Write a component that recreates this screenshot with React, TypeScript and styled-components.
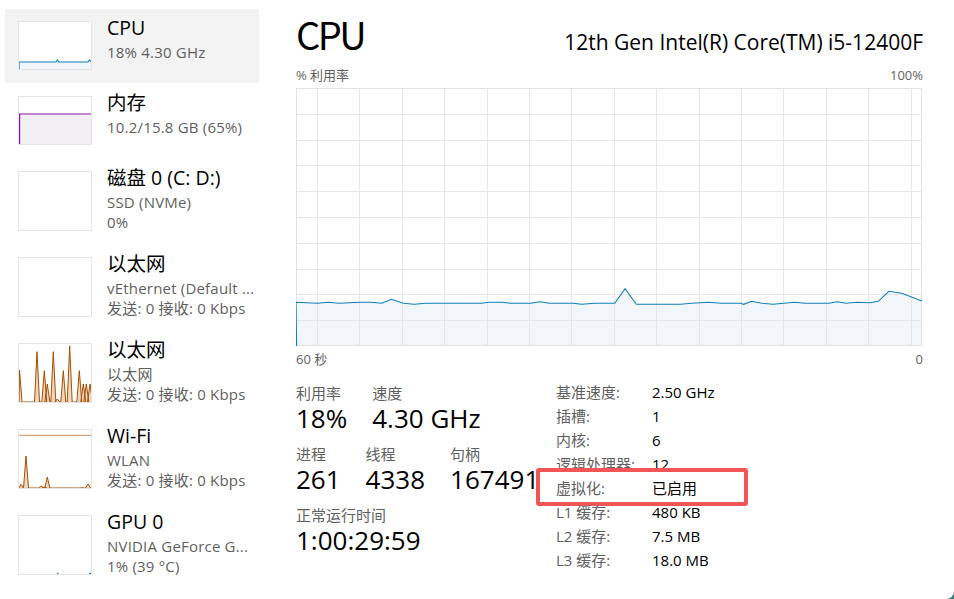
import React from 'react';
import styled, { createGlobalStyle } from 'styled-components';

const GlobalStyle = createGlobalStyle`
  html, body {
    margin: 0;
    padding: 0;
    background: #3f7f83;
  }
  body {
    font-family: "Open Sans", "Noto Sans CJK SC", sans-serif;
    color: #000;
  }
  * { box-sizing: border-box; }
`;

type GraphKind = 'cpu' | 'mem' | 'empty' | 'eth' | 'wifi' | 'gpu';

interface Device {
  title: string;
  lines: string[];
  graph: GraphKind;
  selected?: boolean;
}

const devices: Device[] = [
  { title: 'CPU', lines: ['18% 4.30 GHz'], graph: 'cpu', selected: true },
  { title: '内存', lines: ['10.2/15.8 GB (65%)'], graph: 'mem' },
  { title: '磁盘 0 (C: D:)', lines: ['SSD (NVMe)', '0%'], graph: 'empty' },
  { title: '以太网', lines: ['vEthernet (Default ...', '发送: 0 接收: 0 Kbps'], graph: 'empty' },
  { title: '以太网', lines: ['以太网', '发送: 0 接收: 0 Kbps'], graph: 'eth' },
  { title: 'Wi-Fi', lines: ['WLAN', '发送: 0 接收: 0 Kbps'], graph: 'wifi' },
  { title: 'GPU 0', lines: ['NVIDIA GeForce G...', '1% (39 °C)'], graph: 'gpu' },
];

// main chart points, local to the 626x258 plot
const cpuPoints: [number, number][] = [
  [0, 214.3], [21.5, 215.3], [32.2, 214.3], [42.9, 215.3], [64.5, 214.3], [75.2, 214.3],
  [85.9, 215.3], [95.4, 211.3], [107.4, 215.3], [118.2, 216.3], [128.9, 215.3], [184.7, 215.3],
  [193.4, 214.3], [206.2, 214.3], [214.8, 215.3], [234.2, 215.3], [244.1, 213.7], [253.5, 215.3],
  [277.1, 215.3], [285.7, 216.3], [298.6, 215.3], [318.8, 215.3], [329.1, 200.7], [340.3, 216.3],
  [360.9, 216.3], [384.5, 216.3], [395.3, 215.3], [412.5, 214.3], [425.4, 215.3], [444.7, 215.3],
  [447.7, 216.3], [455.5, 213.3], [466.2, 215.3], [477, 216.3], [487.7, 215.3], [498.5, 214.3],
  [509.2, 215.3], [532.8, 215.3], [541.4, 213.7], [550, 215.3], [560.7, 214.3], [573.6, 214.7],
  [582.2, 213.3], [592.9, 203.3], [605.8, 205.3], [626, 213],
];

const spikes = (peaks: [number, number][], base: number, half = 2.5) => {
  let d = `M0 ${base}`;
  peaks.forEach(([x, y]) => {
    d += ` L${Math.max(0, x - half)} ${base} L${x} ${y} L${x + half} ${base}`;
  });
  return d + ` L72 ${base}`;
};

const ThumbGraph = ({ kind }: { kind: GraphKind }) => {
  if (kind === 'cpu') {
    const line = 'M0 47 L0 40 L37 40 L38.5 38 L40 40 L69 40 L70.5 38 L72 39.5';
    return (
      <svg width="72" height="47" viewBox="0 0 72 47">
        <path d={line + ' L72 47 Z'} fill="#f1f6fa" />
        <path d={line} fill="none" stroke="#117dbb" strokeWidth="1.2" />
      </svg>
    );
  }
  if (kind === 'mem') {
    const line = 'M0.6 47 L0.6 17 L72 17';
    return (
      <svg width="72" height="47" viewBox="0 0 72 47">
        <path d="M0 17 L72 17 L72 47 L0 47 Z" fill="#f2f0f3" />
        <path d={line} fill="none" stroke="#8b12ae" strokeWidth="1.2" />
      </svg>
    );
  }
  if (kind === 'eth') {
    const d = spikes(
      [[0.5, 26], [18, 7.7], [25.3, 26.7], [28.3, 40], [34.3, 7.7], [38.3, 55], [44.3, 26.7],
        [50.7, 2], [60.3, 26.7], [64.3, 40], [67.3, 40], [71, 40]],
      58,
    );
    return (
      <svg width="72" height="58" viewBox="0 0 72 58">
        <path d={d} fill="#efd6bf" stroke="#a74f01" strokeWidth="1" strokeLinejoin="round" />
      </svg>
    );
  }
  if (kind === 'wifi') {
    const d = spikes([[2, 54.3], [7, 26], [22, 56], [25.3, 57], [28.3, 47], [63.3, 57.7], [69, 54]], 58);
    return (
      <svg width="72" height="58" viewBox="0 0 72 58">
        <line x1="0" y1="5.3" x2="72" y2="5.3" stroke="#d4a276" strokeWidth="1.3" />
        <path d={d} fill="#efd6bf" stroke="#a74f01" strokeWidth="1" strokeLinejoin="round" />
      </svg>
    );
  }
  if (kind === 'gpu') {
    return (
      <svg width="72" height="58" viewBox="0 0 72 58">
        <line x1="38" y1="57.4" x2="39.5" y2="57.4" stroke="#117dbb" strokeWidth="1.2" />
        <line x1="70" y1="57.4" x2="72" y2="57.4" stroke="#117dbb" strokeWidth="1.2" />
      </svg>
    );
  }
  return null;
};

const CpuChart = () => {
  const w = 626;
  const h = 258;
  const pts = cpuPoints.map(([x, y]) => `${x} ${y}`).join(' L');
  const hLines = Array.from({ length: 9 }, (_, i) => (i + 1) * (h / 10));
  const vLines = Array.from({ length: 15 }, (_, i) => 21 + i * 42.4);
  return (
    <svg width={w} height={h} viewBox={`0 0 ${w} ${h}`} style={{ display: 'block' }}>
      <path d={`M0 ${h} L${pts} L${w} ${h} Z`} fill="#f1f6fa" />
      {hLines.map((y) => (
        <line key={'h' + y} x1="0" x2={w} y1={Math.round(y) + 0.5} y2={Math.round(y) + 0.5} stroke="#e6e6e6" strokeWidth="1" />
      ))}
      {vLines.map((x) => (
        <line key={'v' + x} x1={Math.round(x) + 0.5} x2={Math.round(x) + 0.5} y1="0" y2={h} stroke="#e6e6e6" strokeWidth="1" />
      ))}
      <rect x="0.5" y="0.5" width={w - 1} height={h - 1} fill="none" stroke="#e3e3e3" strokeWidth="1" />
      <path d={`M0.6 ${h} L${pts}`} fill="none" stroke="#117dbb" strokeWidth="1.1" />
    </svg>
  );
};

export default function App() {
  return (
    <>
      <GlobalStyle />
      <Window>
        <Sidebar>
          {devices.map((d, i) => (
            <DeviceItem key={i} $selected={!!d.selected}>
              <Thumb $tall={d.lines.length > 1}>
                <ThumbGraph kind={d.graph} />
              </Thumb>
              <DeviceText>
                <DeviceTitle>{d.title}</DeviceTitle>
                {d.lines.map((l, j) => (
                  <DeviceLine key={j}>{l}</DeviceLine>
                ))}
              </DeviceText>
            </DeviceItem>
          ))}
        </Sidebar>

        <Main>
          <Header>
            <BigTitle>CPU</BigTitle>
            <CpuName>12th Gen Intel(R) Core(TM) i5-12400F</CpuName>
          </Header>
          <AxisRow $top={9}>
            <span>% 利用率</span>
            <span>100%</span>
          </AxisRow>
          <ChartBox>
            <CpuChart />
          </ChartBox>
          <AxisRow $top={4}>
            <span>60 秒</span>
            <span>0</span>
          </AxisRow>

          <Stats>
            <StatsLeft>
              <StatRow>
                <Stat>
                  <StatLabel>利用率</StatLabel>
                  <StatValue>18%</StatValue>
                </Stat>
                <Stat>
                  <StatLabel>速度</StatLabel>
                  <StatValue>4.30 GHz</StatValue>
                </Stat>
              </StatRow>
              <StatRow>
                <Stat>
                  <StatLabel>进程</StatLabel>
                  <StatValue>261</StatValue>
                </Stat>
                <Stat>
                  <StatLabel>线程</StatLabel>
                  <StatValue>4338</StatValue>
                </Stat>
                <Stat>
                  <StatLabel>句柄</StatLabel>
                  <StatValue>167491</StatValue>
                </Stat>
              </StatRow>
              <StatRow>
                <Stat>
                  <StatLabel>正常运行时间</StatLabel>
                  <StatValue>1:00:29:59</StatValue>
                </Stat>
              </StatRow>
            </StatsLeft>

            <SpecTable>
              <SpecRow><SpecKey>基准速度:</SpecKey><SpecVal>2.50 GHz</SpecVal></SpecRow>
              <SpecRow><SpecKey>插槽:</SpecKey><SpecVal>1</SpecVal></SpecRow>
              <SpecRow><SpecKey>内核:</SpecKey><SpecVal>6</SpecVal></SpecRow>
              <SpecRow><SpecKey>逻辑处理器:</SpecKey><SpecVal>12</SpecVal></SpecRow>
              <SpecRow>
                <Highlight />
                <SpecKey>虚拟化:</SpecKey>
                <SpecVal>已启用</SpecVal>
              </SpecRow>
              <SpecRow><SpecKey>L1 缓存:</SpecKey><SpecVal>480 KB</SpecVal></SpecRow>
              <SpecRow><SpecKey>L2 缓存:</SpecKey><SpecVal>7.5 MB</SpecVal></SpecRow>
              <SpecRow><SpecKey>L3 缓存:</SpecKey><SpecVal>18.0 MB</SpecVal></SpecRow>
            </SpecTable>
          </Stats>
        </Main>
      </Window>
    </>
  );
}

const Window = styled.div`
  width: 954px;
  height: 599px;
  background: #ffffff;
  border-bottom-right-radius: 8px;
  overflow: hidden;

  display: grid;
  grid-template-columns: 259px 1fr;
`;

const Sidebar = styled.div`
  padding: 9px 0 0 5px;
  display: flex;
  flex-direction: column;
  gap: 1px;
`;

const DeviceItem = styled.div<{ $selected: boolean }>`
  display: flex;
  align-items: flex-start;
  gap: 15px;
  padding: 12px 0 13px 13px;
  background: ${(p) => (p.$selected ? '#f3f3f3' : 'transparent')};
  border-radius: 2px;
`;

const Thumb = styled.div<{ $tall: boolean }>`
  flex: none;
  width: 74px;
  height: ${(p) => (p.$tall ? 60 : 49)}px;
  border: 1px solid #e4e4e4;
  background: #fff;

  svg { display: block; }
`;

const DeviceText = styled.div`
  margin: -5px 0 -8px;
  display: flex;
  flex-direction: column;
  white-space: nowrap;
`;

const DeviceTitle = styled.div`
  font-size: 19.5px;
  line-height: 24px;
  margin-bottom: 2px;
  color: #000;
`;

const DeviceLine = styled.div`
  font-size: 15px;
  line-height: 20px;
  letter-spacing: 0.2px;
  color: #5f5f5f;
`;

const Main = styled.div`
  padding: 11px 31px 0 37px;
  display: flex;
  flex-direction: column;
`;

const Header = styled.div`
  display: flex;
  justify-content: space-between;
  align-items: baseline;
  height: 46px;
`;

const BigTitle = styled.div`
  font-family: "Noto Sans CJK SC", sans-serif;
  font-size: 38px;
  line-height: 46px;
  letter-spacing: -2.5px;
`;

const CpuName = styled.div`
  font-size: 21px;
  line-height: 26px;
`;

const AxisRow = styled.div<{ $top: number }>`
  margin-top: ${(p) => p.$top}px;
  display: flex;
  justify-content: space-between;
  font-size: 13px;
  line-height: 18px;
  color: #5f5f5f;
`;

const ChartBox = styled.div`
  margin-top: 4px;
`;

const Stats = styled.div`
  margin-top: 12px;
  display: flex;
`;

const StatsLeft = styled.div`
  width: 260px;
  padding-top: 3px;
  display: flex;
  flex-direction: column;
  gap: 11px;
`;

const StatRow = styled.div`
  display: flex;
  gap: 25px;
`;

const Stat = styled.div`
  display: flex;
  flex-direction: column;
  white-space: nowrap;
`;

const StatLabel = styled.div`
  font-size: 15px;
  line-height: 20px;
  color: #5f5f5f;
`;

const StatValue = styled.div`
  font-size: 26px;
  line-height: 30px;
  color: #000;
`;

const SpecTable = styled.div`
  display: flex;
  flex-direction: column;
`;

const SpecRow = styled.div`
  position: relative;
  display: grid;
  grid-template-columns: 96px auto;
  font-size: 15px;
  line-height: 24px;
`;

const SpecKey = styled.span`
  color: #5f5f5f;
`;

const SpecVal = styled.span`
  color: #000;
`;

const Highlight = styled.div`
  position: absolute;
  left: -20px;
  top: -8px;
  width: 212px;
  height: 38px;
  border: 4px solid #f25555;
  border-radius: 3px;
  pointer-events: none;
`;
